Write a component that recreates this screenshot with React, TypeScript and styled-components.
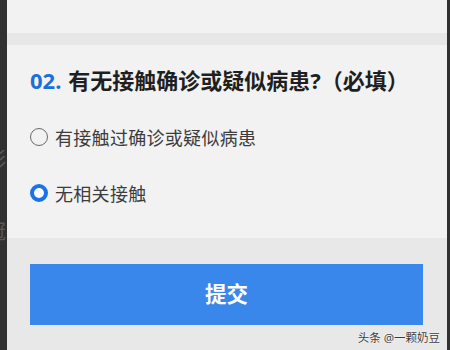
import React from 'react'
import styled, {createGlobalStyle} from 'styled-components'

const GlobalStyle = createGlobalStyle`
  html, body {
    margin: 0;
    padding: 0;
    width: 450px;
    height: 350px;
    overflow: hidden;
    background: #333333;
  }
  * {
    box-sizing: border-box;
  }
`

const cjk = `"Noto Sans", "Noto Sans CJK SC", sans-serif`

const Page = styled.div`
  position: relative;
  display: flex;
  width: 450px;
  height: 350px;
  font-family: ${cjk};
`

const Edge = styled.div<{$width: number}>`
  width: ${(p) => p.$width}px;
  flex: none;
  background: #313131;
  overflow: hidden;
  display: flex;
  flex-direction: column;
`

const GhostChar = styled.span<{$top: number}>`
  display: block;
  margin-top: ${(p) => p.$top}px;
  margin-left: -14px;
  font-size: 20px;
  line-height: 20px;
  color: #5a5a5a;
`

const Main = styled.div`
  flex: 1;
  display: flex;
  flex-direction: column;
  background: #f2f2f2;
`

const TopStrip = styled.div`
  height: 33px;
  background: #f2f2f2;
`

const Divider = styled.div`
  height: 12px;
  background: #e7e7e7;
`

const Card = styled.section`
  height: 193px;
  padding: 20px 0 0 23px;
  background: #f2f2f2;
`

const Title = styled.h2`
  margin: 0;
  height: 30px;
  line-height: 30px;
  font-size: 22px;
  font-weight: 700;
  color: #1f1f1f;
  white-space: nowrap;
`

const Num = styled.span`
  color: #1b6fd8;
  margin-right: 7px;
`

const Options = styled.div`
  margin-top: 14px;
  display: flex;
  flex-direction: column;
`

const Option = styled.label`
  display: flex;
  align-items: center;
  height: 56px;
  gap: 7px;
  font-size: 18px;
  letter-spacing: 0.3px;
  color: #3c3c3c;
`

const Radio = styled.span<{$checked?: boolean}>`
  width: 18px;
  height: 18px;
  border-radius: 50%;
  flex: none;
  border: ${(p) => (p.$checked ? '4.5px solid #1a73e8' : '1.5px solid #6a6a6a')};
  background: ${(p) => (p.$checked ? '#fff' : 'transparent')};
`

const Footer = styled.div`
  flex: 1;
  background: #e8e8e8;
  padding: 26px 24px 0 23px;
`

const SubmitButton = styled.button`
  display: flex;
  align-items: center;
  justify-content: center;
  width: 100%;
  height: 61px;
  padding: 0 0 4px;
  border: none;
  background: #3a87eb;
  color: #fff;
  font-family: ${cjk};
  font-size: 21.5px;
  font-weight: 700;
  cursor: pointer;
`

const Watermark = styled.div`
  position: absolute;
  right: 10px;
  bottom: 4px;
  font-size: 11.5px;
  line-height: 16px;
  color: #3a3a3a;
  text-shadow: 0 0 2px #fff, 0 0 1px #fff;
  white-space: nowrap;
`

export default function App() {
  return (
    <Page>
      <GlobalStyle />
      <Edge $width={7}>
        <GhostChar $top={150}>彩</GhostChar>
        <GhostChar $top={52}>冠</GhostChar>
      </Edge>
      <Main>
        <TopStrip />
        <Divider />
        <Card>
          <Title>
            <Num>02.</Num>有无接触确诊或疑似病患?（必填）
          </Title>
          <Options>
            <Option>
              <Radio />
              有接触过确诊或疑似病患
            </Option>
            <Option>
              <Radio $checked />
              无相关接触
            </Option>
          </Options>
        </Card>
        <Footer>
          <SubmitButton>提交</SubmitButton>
        </Footer>
      </Main>
      <Edge $width={3} />
      <Watermark>头条 @一颗奶豆</Watermark>
    </Page>
  )
}
